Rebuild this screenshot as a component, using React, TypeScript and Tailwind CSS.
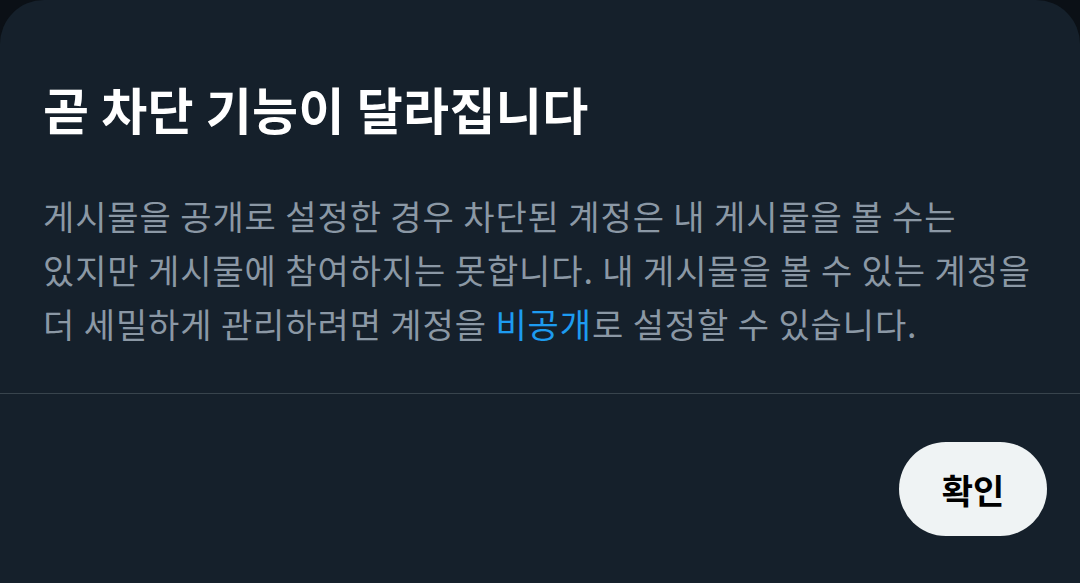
import React from 'react'

export default function App() {
  return (
    <div className="w-[1080px] h-[583px] bg-[#0b1016] overflow-hidden" style={{ fontFamily: '"Noto Sans CJK KR", "Noto Sans", sans-serif' }}>
      {/* Dialog sheet */}
      <div className="h-full bg-[#15202b] rounded-t-[44px] flex flex-col">
        <div className="px-[43px] pt-[78px]">
          <h1 className="text-[50px] leading-[60px] font-bold text-white tracking-[0.4px]">곧 차단 기능이 달라집니다</h1>
          <p className="mt-[51px] text-[34px] leading-[54px] text-[#8b98a5] whitespace-nowrap tracking-[0.9px]">
            게시물을 공개로 설정한 경우 차단된 계정은 내 게시물을 볼 수는<br />
            있지만 게시물에 참여하지는 못합니다. 내 게시물을 볼 수 있는 계정을<br />
            더 세밀하게 관리하려면 계정을 <span className="text-[#1d9bf0]">비공개</span>로 설정할 수 있습니다.
          </p>
        </div>
        <div className="mt-[42px] h-px bg-[#38444d]" />
        <div className="flex justify-end px-[33px] pt-[48px]">
          <button className="w-[148px] h-[94px] rounded-full bg-[#eff3f4] text-black text-[34px] font-bold">확인</button>
        </div>
      </div>
    </div>
  )
}
